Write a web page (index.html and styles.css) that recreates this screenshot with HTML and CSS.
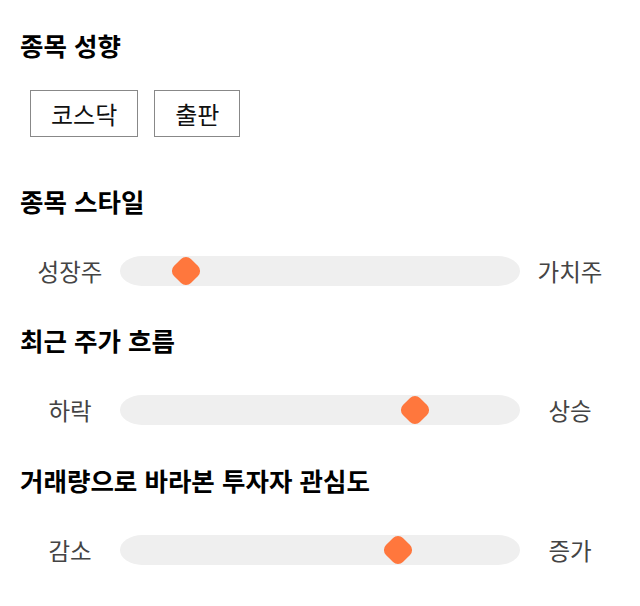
FILE: index.html
```html
<!DOCTYPE html>
<html lang="ko">
<head>
<meta charset="utf-8">
<link rel="stylesheet" href="styles.css">
</head>
<body>
<div class="page">
  <section class="group">
    <h2 class="title">종목 성향</h2>
    <div class="chips">
      <button class="chip">코스닥</button>
      <button class="chip">출판</button>
    </div>
  </section>
  <section class="group">
    <h2 class="title">종목 스타일</h2>
    <div class="slider">
      <span class="label">성장주</span>
      <div class="track"><span class="thumb" style="left: 66px"></span></div>
      <span class="label">가치주</span>
    </div>
  </section>
  <section class="group">
    <h2 class="title">최근 주가 흐름</h2>
    <div class="slider">
      <span class="label">하락</span>
      <div class="track"><span class="thumb" style="left: 295px"></span></div>
      <span class="label">상승</span>
    </div>
  </section>
  <section class="group">
    <h2 class="title">거래량으로 바라본 투자자 관심도</h2>
    <div class="slider">
      <span class="label">감소</span>
      <div class="track"><span class="thumb" style="left: 278px"></span></div>
      <span class="label">증가</span>
    </div>
  </section>
</div>
</body>
</html>
```

FILE: styles.css
```css
* { box-sizing: border-box; }
html, body { margin: 0; padding: 0; background: #fff; }
body {
  font-family: "Noto Sans CJK KR", "Noto Sans", sans-serif;
  color: #000;
}
.page {
  width: 640px;
  padding: 29px 20px 0 20px;
  display: flex;
  flex-direction: column;
}
.group { display: flex; flex-direction: column; }
.title {
  margin: 0;
  font-size: 25.5px;
  font-weight: 700;
  line-height: 32px;
  height: 32px;
  white-space: nowrap;
}
.chips {
  display: flex;
  gap: 16px;
  margin: 29px 0 0 10px;
  height: 47px;
}
.chip {
  font-family: inherit;
  font-size: 24px;
  line-height: 1;
  color: #111;
  background: #fff;
  border: 1px solid #888;
  border-radius: 0;
  padding: 0 20px;
  height: 47px;
  margin: 0;
}
.group:nth-child(2) { margin-top: 48px; }
.group:nth-child(3) { margin-top: 38px; }
.group:nth-child(4) { margin-top: 39px; }
.slider {
  display: flex;
  align-items: center;
  margin-top: 39px;
  height: 30px;
}
.label {
  width: 100px;
  text-align: center;
  font-size: 23.5px;
  color: #444;
  line-height: 30px;
  white-space: nowrap;
}
.track {
  position: relative;
  width: 400px;
  height: 30px;
  background: #efefef;
  border-radius: 22px / 15px;
}
.thumb {
  position: absolute;
  top: 3px;
  width: 24px;
  height: 24px;
  margin-left: -12px;
  background: #ff773d;
  border-radius: 7px;
  transform: rotate(45deg);
}
```
